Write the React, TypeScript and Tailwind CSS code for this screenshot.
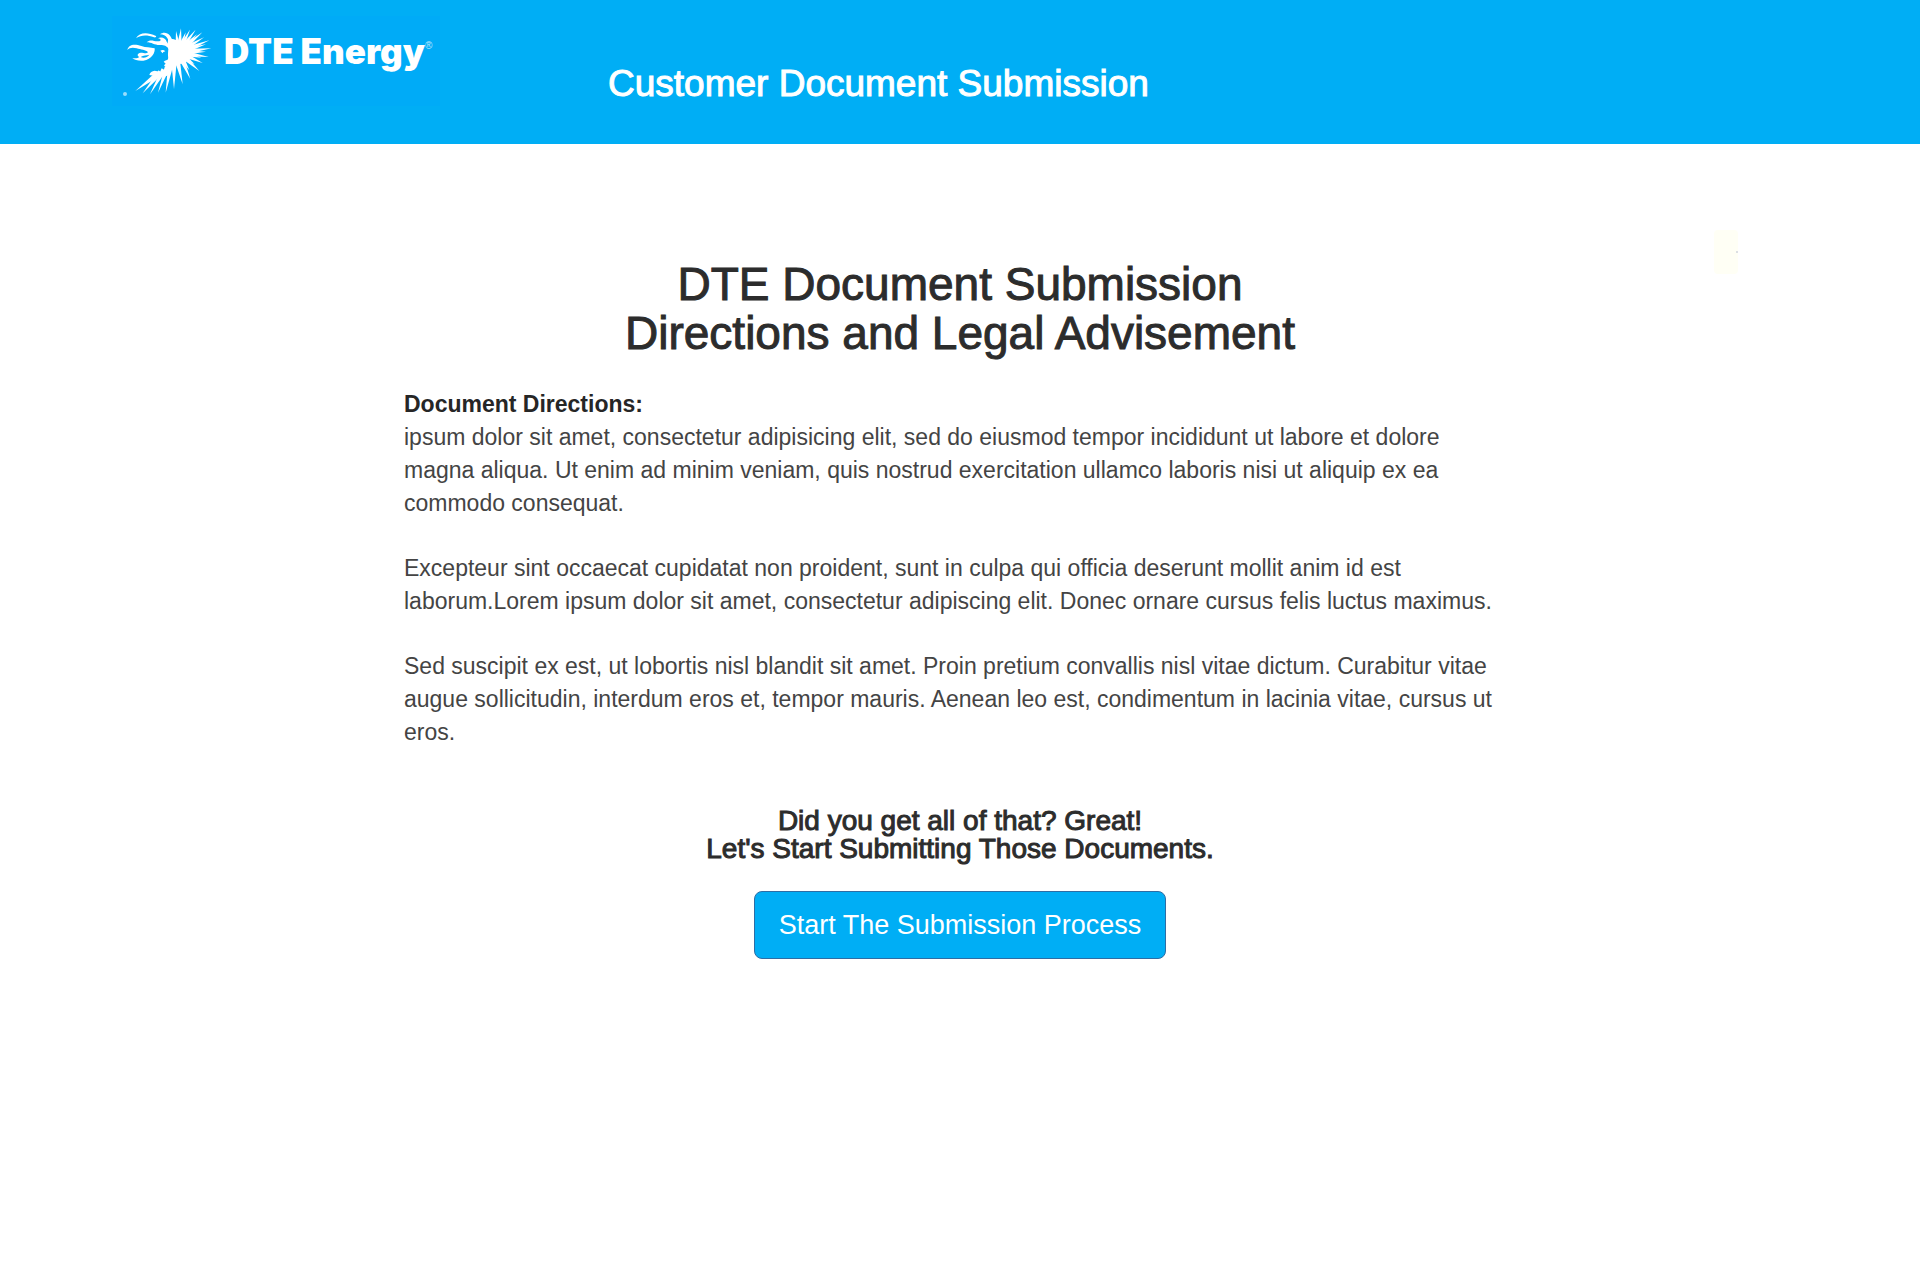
const rays = [
  [228, 60], [243, 52], [257, 64], [270, 56], [287, 56], [291, 70], [307, 64], [312, 79], [328, 88], [318, 100],
  [334, 112], [318, 122], [326, 138], [304, 140], [308, 156], [284, 160], [298, 180], [268, 178], [271, 204],
]

const lowerRays = [
  [248, 220], [222, 234], [197, 245], [174, 245], [150, 250], [128, 247], [106, 240],
]

function ray(cx: number, cy: number, x: number, y: number, w: number) {
  const len = Math.hypot(x - cx, y - cy)
  const dx = (-(y - cy) / len) * w
  const dy = ((x - cx) / len) * w
  return `${cx + dx},${cy + dy} ${x},${y} ${cx - dx},${cy - dy}`
}

function SunLogo() {
  return (
    <svg viewBox="36 15 336 270" className="h-[90px] w-28 shrink-0" fill="white" aria-hidden="true">
      {/* sun rays */}
      {rays.map(([x, y]) => (
        <polygon key={`${x}-${y}`} points={ray(236, 124, x, y, 10)} />
      ))}
      {lowerRays.map(([x, y], i) => (
        <polygon key={`${x}-${y}`} points={ray(232 - i * 10, 148 + i * 7, x, y, 8)} />
      ))}
      <ellipse cx="238" cy="125" rx="33" ry="34" />
      {/* face profile */}
      <path d="M205 84 C218 80 240 90 254 104 L256 146 C240 156 226 164 213 176 L202 194 L182 198 L148 192 C150 184 156 180 164 179 L184 183 C190 184 194 180 193 175 L197 169 L192 163 L197 158 L191 152 C196 148 203 148 204 145 C206 138 202 130 205 122 C207 112 200 104 205 84 Z" />
      {/* eye */}
      <path d="M181 119 C187 115 193 117 196 121 L190 123 L188 127 Z" />
      {/* hair */}
      <path d="M108 82 C118 65 140 62 168 75 C170 78 166 80 162 79 C142 72 124 71 108 82 Z" />
      <path d="M82 117 C86 99 104 98 124 105 C138 110 150 108 164 112 C166 124 156 146 130 149 C116 150 104 148 97 141 C106 143 114 142 118 138 C110 134 112 126 122 125 C132 125 138 130 144 124 C138 116 122 116 110 112 C98 108 88 110 82 117 Z" />
      <path d="M122 138 C130 142 142 140 148 131 C140 134 130 132 122 138 Z" fill="#00abf7" />
      <path d="M140 94 C150 84 160 90 172 91 C184 92 186 84 174 82 C184 76 198 82 200 92 C206 100 210 106 208 116 C200 104 192 102 182 102 C166 104 156 94 140 94 Z" />
      <path d="M180 70 C196 58 216 70 218 96 L206 104 C208 86 200 70 180 70 Z" />
      <circle cx="75" cy="249" r="6" opacity="0.6" />
    </svg>
  )
}

function Header() {
  return (
    <header className="flex h-36 items-start bg-[#00aef5] pl-28 text-white">
      <a href="#" aria-label="DTE Energy home" className="mt-4 flex w-[328px] items-start bg-[#00abf7]">
        <SunLogo />
        <span className="mt-3 font-[Inter,sans-serif] text-[35px] leading-[46px] font-black whitespace-nowrap">
          DTE Energy
        </span>
        <span className="mt-6 text-[10px] leading-3 opacity-70">®</span>
      </a>
      <h1 className="mt-16 ml-[168px] text-[37px] leading-10 [-webkit-text-stroke:1px_currentColor]">
        Customer Document Submission
      </h1>
    </header>
  )
}

export default function App() {
  return (
    <div className="relative min-h-screen bg-white font-['Liberation_Sans',Arial,sans-serif] text-[#2c2c2c]">
      <Header />

      <main className="mx-auto max-w-[1112px] pt-[116px]">
        <h2 className="text-center text-[46px] leading-[49px] [-webkit-text-stroke:1px_currentColor]">
          DTE Document Submission
          <br />
          Directions and Legal Advisement
        </h2>

        <section className="mt-[30px] text-[23px] leading-[33px] text-[#444444]">
          <h3 className="font-bold text-[#262626]">Document Directions:</h3>
          <p>
            ipsum dolor sit amet, consectetur adipisicing elit, sed do eiusmod tempor incididunt ut labore et dolore
            <br />
            magna aliqua. Ut enim ad minim veniam, quis nostrud exercitation ullamco laboris nisi ut aliquip ex ea
            <br />
            commodo consequat.
          </p>
          <p className="mt-8">
            Excepteur sint occaecat cupidatat non proident, sunt in culpa qui officia deserunt mollit anim id est
            <br />
            laborum.Lorem ipsum dolor sit amet, consectetur adipiscing elit. Donec ornare cursus felis luctus maximus.
          </p>
          <p className="mt-8">
            Sed suscipit ex est, ut lobortis nisl blandit sit amet. Proin pretium convallis nisl vitae dictum. Curabitur vitae
            <br />
            augue sollicitudin, interdum eros et, tempor mauris. Aenean leo est, condimentum in lacinia vitae, cursus ut
            <br />
            eros.
          </p>
        </section>

        <div className="mt-[58px] flex flex-col items-center">
          <h3 className="text-center text-[28px] leading-7 [-webkit-text-stroke:1px_currentColor]">
            Did you get all of that? Great!
            <br />
            Let's Start Submitting Those Documents.
          </h3>
          <button
            type="button"
            className="mt-7 h-[68px] rounded-lg border border-[#2e6da4] bg-[#00aef5] px-6 text-[27px] text-white"
          >
            Start The Submission Process
          </button>
        </div>
      </main>

      {/* pale mark near the right edge */}
      <div className="absolute top-[230px] right-[182px] flex h-11 w-6 items-center justify-end rounded-sm bg-[#fffff5]">
        <span className="size-0.5 rounded-full bg-gray-300" />
      </div>
    </div>
  )
}
